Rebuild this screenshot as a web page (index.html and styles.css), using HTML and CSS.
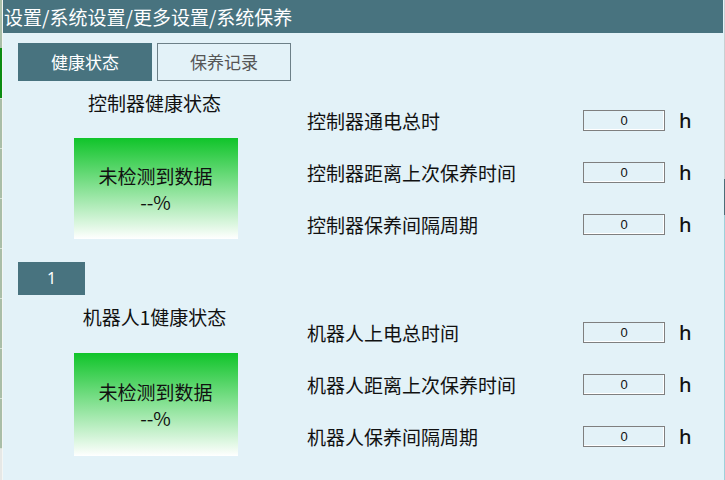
FILE: index.html
```html
<!DOCTYPE html>
<html lang="zh-CN">
<head>
<meta charset="utf-8">
<link rel="stylesheet" href="styles.css">
</head>
<body>
<div class="shell">
  <div class="edge-left">
    <span class="seg"></span><span class="seg active"></span><span class="seg"></span><span class="seg"></span><span class="seg"></span><span class="seg"></span><span class="seg"></span><span class="seg"></span><span class="seg"></span><span class="seg blank"></span>
  </div>
  <div class="panel">
    <div class="header">设置/系统设置/更多设置/系统保养</div>

    <div class="section first">
      <div class="left-col">
        <div class="tabs">
          <div class="tab active">健康状态</div>
          <div class="tab">保养记录</div>
        </div>
        <div class="title">控制器健康状态</div>
        <div class="health">
          <div>未检测到数据</div>
          <div>--%</div>
        </div>
      </div>
      <div class="right-col">
        <div class="row"><span class="label">控制器通电总时</span><span class="field">0</span><span class="unit">h</span></div>
        <div class="row"><span class="label">控制器距离上次保养时间</span><span class="field">0</span><span class="unit">h</span></div>
        <div class="row"><span class="label">控制器保养间隔周期</span><span class="field">0</span><span class="unit">h</span></div>
      </div>
    </div>

    <div class="section second">
      <div class="left-col">
        <div class="robot-btn">1</div>
        <div class="title">机器人1健康状态</div>
        <div class="health">
          <div>未检测到数据</div>
          <div>--%</div>
        </div>
      </div>
      <div class="right-col">
        <div class="row"><span class="label">机器人上电总时间</span><span class="field">0</span><span class="unit">h</span></div>
        <div class="row"><span class="label">机器人距离上次保养时间</span><span class="field">0</span><span class="unit">h</span></div>
        <div class="row"><span class="label">机器人保养间隔周期</span><span class="field">0</span><span class="unit">h</span></div>
      </div>
    </div>
  </div>
  <div class="edge-right">
    <span class="r1"></span><span class="r2"></span><span class="r3"></span>
  </div>
</div>
</body>
</html>
```

FILE: styles.css
```css
* { box-sizing: border-box; }
html, body { margin: 0; padding: 0; }
body {
  width: 725px;
  height: 480px;
  overflow: hidden;
  background: #e3f2f8;
  font-family: "Noto Sans CJK SC", "Noto Sans", sans-serif;
  color: #111;
}
.shell {
  display: flex;
  height: 480px;
}
.edge-left {
  width: 3px;
  display: flex;
  flex-direction: column;
  background: #f4f6f4;
}
.edge-left .seg {
  display: block;
  width: 2px;
  height: 50px;
  background: #a9bea8;
  border-top: 1px solid #d8e2d8;
}
.edge-left .seg:first-child { height: 48px; border-top: none; }
.edge-left .seg.active { background: #0b8c13; border-top: none; }
.edge-left .seg.blank { flex: 1; background: #e6e8e6; height: auto; }

.panel {
  width: 720px;
  display: flex;
  flex-direction: column;
  background: #e3f2f8;
}
.header {
  height: 33px;
  background: #48737f;
  color: #fff;
  font-size: 19px;
  line-height: 33px;
  padding-left: 1px;
  white-space: nowrap;
}
.section {
  display: flex;
  align-items: flex-start;
  padding-left: 15px;
}
.left-col {
  width: 273px;
  display: flex;
  flex-direction: column;
  align-items: center;
}
.tabs {
  display: flex;
  gap: 5px;
  margin-top: 10px;
  align-self: flex-start;
}
.tab {
  width: 134px;
  height: 38px;
  font-size: 17px;
  line-height: 36px;
  text-align: center;
  color: #555;
  border: 1px solid #6d8088;
  background: #e3f2f8;
}
.tab.active {
  background: #48737f;
  border-color: #48737f;
  color: #fff;
}
.title {
  font-size: 19px;
  line-height: 24px;
  margin-top: 10px;
  text-align: center;
}
.health {
  width: 164px;
  height: 101px;
  margin-top: 23px;
  margin-left: 2px;
  background: linear-gradient(to bottom, #10c42a 0%, #fff 100%);
  display: flex;
  flex-direction: column;
  justify-content: center;
  align-items: center;
  font-size: 19px;
  line-height: 26px;
  color: #111;
}
.robot-btn {
  align-self: flex-start;
  width: 67px;
  height: 33px;
  margin-top: 23px;
  background: #48737f;
  color: #fff;
  font-family: "Noto Sans", sans-serif;
  font-size: 16px;
  line-height: 33px;
  text-align: center;
}
.second .title { margin-top: 10px; }
.second .health { margin-top: 24px; height: 103px; }

.right-col {
  flex: 1;
  display: flex;
  flex-direction: column;
  gap: 26px;
  padding-left: 16px;
  padding-right: 32px;
}
.first .right-col { padding-top: 74px; }
.second .right-col { padding-top: 80px; }
.row {
  display: flex;
  align-items: center;
  height: 26px;
}
.label {
  flex: 1;
  font-size: 19px;
  white-space: nowrap;
}
.field {
  width: 82px;
  height: 21px;
  border: 1px solid #7f7f7f;
  box-shadow: inset -1px -1px 0 #fff;
  font-family: "Liberation Sans", sans-serif;
  font-size: 13px;
  line-height: 19px;
  text-align: center;
  color: #111;
}
.unit {
  width: 26px;
  padding-left: 14px;
  font-family: "Noto Sans", sans-serif;
  font-size: 20px;
  font-weight: 500;
  color: #111;
}
.edge-right {
  width: 2px;
  display: flex;
  flex-direction: column;
  background: #e3f2f8;
}
.edge-right span { display: block; width: 1px; margin-left: 1px; }
.edge-right .r1 { height: 179px; background: #c9cfd2; }
.edge-right .r2 { height: 36px; background: #4d6d78; }
.edge-right .r3 { flex: 1; background: #9fd0da; }
```
